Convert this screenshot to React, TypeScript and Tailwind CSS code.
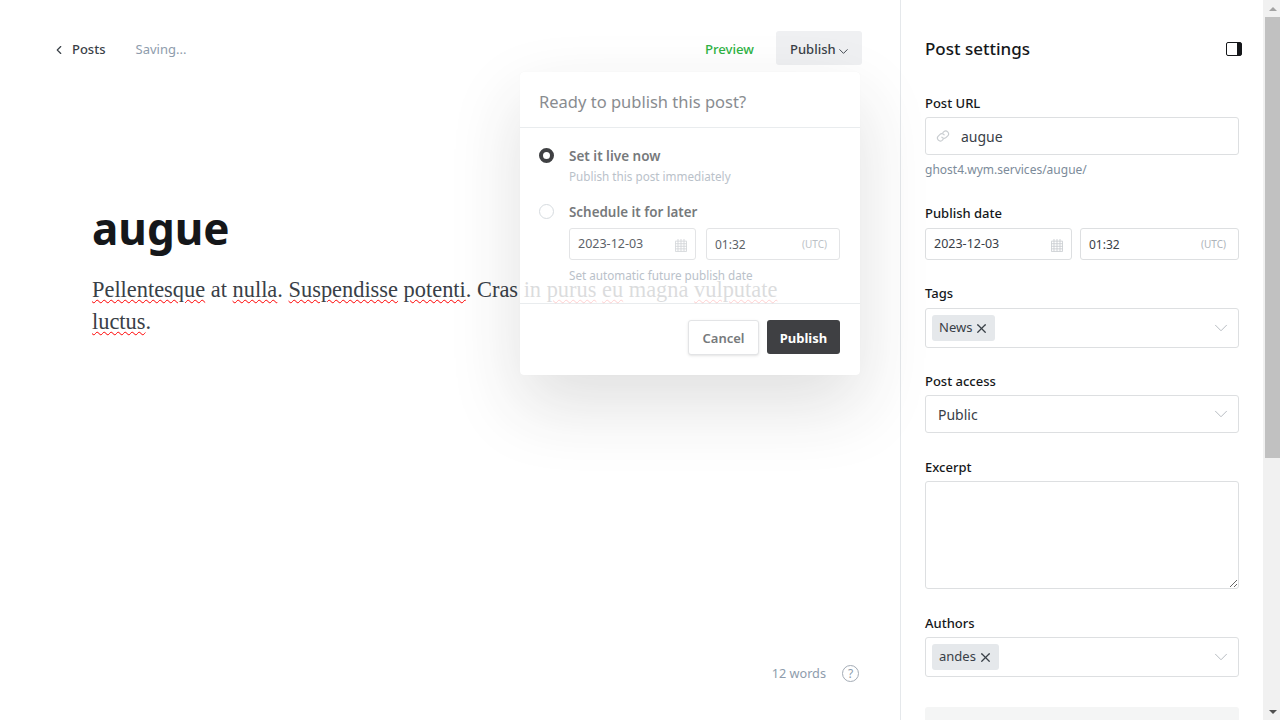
import { ChevronDown, ChevronLeft, X } from "lucide-react";

const sans = { fontFamily: '"Noto Sans", sans-serif' };

function CalendarIcon({ className }: { className: string }) {
  return (
    <svg viewBox="0 0 14 16" className={className} fill="none" stroke="currentColor" strokeWidth="1">
      <path d="M0.5 3.5h13v12h-13z M0.5 6.5h13 M0.5 9.5h13 M0.5 12.5h13 M3.5 1v14.5 M7 1v14.5 M10.5 1v14.5" />
    </svg>
  );
}

function LinkIcon() {
  return (
    <svg viewBox="0 0 24 24" className="w-[14px] h-[14px] text-[#c8ccd0]" fill="none" stroke="currentColor" strokeWidth="2" strokeLinecap="round">
      <path d="M10 14a5 5 0 0 0 7.5.5l3-3a5 5 0 0 0-7-7l-1.7 1.7" />
      <path d="M14 10a5 5 0 0 0-7.5-.5l-3 3a5 5 0 0 0 7 7l1.7-1.7" />
    </svg>
  );
}

function Field({ label, mt, mb = "mb-[5px]", children }: { label: string; mt: string; mb?: string; children: React.ReactNode }) {
  return (
    <div className={mt}>
      <div className={`text-[13px] leading-[18px] font-medium text-[#15171a] ${mb}`}>{label}</div>
      {children}
    </div>
  );
}

function Tag({ name }: { name: string }) {
  return (
    <div className="h-[26px] pl-[7px] pr-[6px] rounded-[3px] bg-[#e5e8eb] flex items-center gap-[2px] text-[13px] text-[#394047]">
      {name}
      <X size={15} strokeWidth={2} className="text-[#394047]" />
    </div>
  );
}

function TokenSelect({ name }: { name: string }) {
  return (
    <div className="h-10 border border-[#dddfe1] rounded-[3px] pl-[6px] pr-[6px] flex items-center justify-between">
      <Tag name={name} />
      <ChevronDown size={22} strokeWidth={1} className="text-[#b0b6bc]" />
    </div>
  );
}

function DateInputs({ small }: { small?: boolean }) {
  return (
    <div className={`flex w-full ${small ? "gap-[10px]" : "gap-2"}`}>
      <div className={`h-8 shrink-0 pt-[1px] border border-[#dddfe1] rounded-[3px] px-2 flex items-center justify-between text-[12.5px] text-[#394047] ${small ? "w-[127px]" : "w-[147px]"}`}>
        2023-12-03
        <CalendarIcon className="w-3 h-[14px] text-[#c8ccd0]" />
      </div>
      <div className={`h-8 shrink-0 pt-[1px] border border-[#dddfe1] rounded-[3px] px-2 flex items-center justify-between text-xs text-[#394047] ${small ? "w-[134px]" : "w-[159px]"}`}>
        01:32
        <span className="text-[10px] text-[#aeb4ba] pr-1">(UTC)</span>
      </div>
    </div>
  );
}

function PublishMenu() {
  return (
    <div className="absolute left-[520px] top-[72px] w-[340px] h-[303px] bg-white rounded-[4px] opacity-[0.82] shadow-[0_0_1px_rgba(0,0,0,0.05),0_30px_70px_rgba(0,0,0,0.15)]">
      <div className="h-[56px] pl-[19px] pt-[6px] flex items-center border-b border-[#e5e8eb] text-[16.5px] text-[#6f7378]">Ready to publish this post?</div>
      <div className="pt-[19px] pl-[19px] pr-5">
        <div className="flex">
          <div className="w-[15px] h-[15px] mt-[1px] rounded-full border-[4px] border-[#15171a] bg-white" />
          <div className="ml-[15px]">
            <div className="text-[13.5px] leading-[18px] font-semibold text-[#595c60]">Set it live now</div>
            <div className="mt-[1px] text-[11.7px] leading-[20px] text-[#abb4be]">Publish this post immediately</div>
          </div>
        </div>
        <div className="flex mt-[17px]">
          <div className="w-[15px] h-[15px] mt-[1px] rounded-full border border-[#ced4d9] bg-white shrink-0" />
          <div className="ml-[15px]">
            <div className="text-[13.4px] leading-[18px] font-semibold text-[#595c60]">Schedule it for later</div>
            <div className="mt-[7px]"><DateInputs small /></div>
            <div className="text-[11.7px] leading-4 mt-[7px] text-[#abb4be]">Set automatic future publish date</div>
          </div>
        </div>
      </div>
      <div className="absolute left-0 right-0 top-[231px] border-t border-[#e5e8eb] flex justify-end gap-2 pt-4 pr-5">
        <div className="w-[71px] h-[35px] pt-[3px] rounded-[3px] border border-[#dddfe1] shadow-sm bg-white flex items-center justify-center text-[13px] font-semibold text-[#595c60]">Cancel</div>
        <div className="w-[73px] h-[34px] pt-[3px] rounded-[3px] bg-[#15171a] flex items-center justify-center text-[13px] font-bold text-white">Publish</div>
      </div>
    </div>
  );
}

export default function App() {
  const wavy = "underline decoration-wavy decoration-[#f00] decoration-1 underline-offset-2";
  return (
    <div className="flex h-screen overflow-hidden bg-white relative" style={sans}>
      <main className="w-[900px] shrink-0 flex flex-col">
        <header className="h-[100px] shrink-0 flex items-center pl-[52px] pr-[38px]">
          <ChevronLeft size={14} strokeWidth={2} className="text-[#394047]" />
          <span className="ml-[6px] text-[13px] font-medium text-[#394047]">Posts</span>
          <span className="ml-[30px] text-[13px] text-[#8e9cac]">Saving...</span>
          <span className="ml-auto text-[13.2px] font-medium text-[#2fb344]">Preview</span>
          <div className="ml-[22px] mb-1 w-[86px] h-[34px] pt-1 pl-[14px] rounded-[3px] bg-[#eff0f2] flex items-center text-[13px] font-medium text-[#394047]">
            Publish
            <ChevronDown size={15} strokeWidth={1.5} className="mt-[3px]" />
          </div>
        </header>
        <div className="pl-[92px] pr-[108px] pt-[102px]">
          <h1 className="text-[44px] leading-[52px] font-bold text-[#15171a]">augue</h1>
          <p className="mt-[20px] text-[22.4px] leading-8 text-[#394047]" style={{ fontFamily: '"Liberation Serif", serif' }}>
            <span className={wavy}>Pellentesque</span> at <span className={wavy}>nulla</span>. <span className={wavy}>Suspendisse</span> <span className={wavy}>potenti</span>. Cras in <span className={wavy}>purus</span> <span className={wavy}>eu</span> magna <span className={wavy}>vulputate</span> <span className={wavy}>luctus</span>.
          </p>
        </div>
        <div className="mt-auto h-[62px] flex items-start justify-end gap-4 pr-[41px] text-[12.7px] text-[#8e9cac]">
          <span className="leading-[24px] mt-[3px]">12 words</span>
          <div className="w-[17px] h-[17px] mt-[7px] rounded-full border border-[#a3abb5] flex items-center justify-center text-[12px] leading-none text-[#8e9cac]">?</div>
        </div>
      </main>
      <PublishMenu />
      <aside className="w-[363px] shrink-0 border-l border-[#e5e8eb] pl-6 pr-6">
        <div className="h-[94px] pt-1 flex items-center justify-between">
          <span className="text-[17px] font-medium text-[#15171a]">Post settings</span>
          <div className="mr-[-3px] w-4 h-[14px] rounded-[2px] border-[1.5px] border-[#15171a] flex justify-end">
            <div className="w-1 bg-[#15171a]" />
          </div>
        </div>
        <Field label="Post URL" mt="">
          <div className="h-[38px] border border-[#dddfe1] rounded-[3px] flex items-center pl-[10px]">
            <LinkIcon />
            <span className="ml-[11px] text-[14px] text-[#394047]">augue</span>
          </div>
        </Field>
        <div className="mt-[5px] text-xs leading-5 text-[#7c8b9a]">ghost4.wym.services/augue/</div>
        <Field label="Publish date" mt="mt-6" mb="mb-[6px]">
          <DateInputs />
        </Field>
        <Field label="Tags" mt="mt-6" mb="mb-[6px]">
          <TokenSelect name="News" />
        </Field>
        <Field label="Post access" mt="mt-6">
          <div className="h-[38px] border border-[#dddfe1] rounded-[3px] flex items-center justify-between pl-3 pr-[6px]">
            <span className="text-[14px] text-[#394047]">Public</span>
            <ChevronDown size={22} strokeWidth={1} className="text-[#b0b6bc]" />
          </div>
        </Field>
        <Field label="Excerpt" mt="mt-[25px]">
          <textarea className="block w-full h-[108px] border border-[#dddfe1] rounded-[3px] outline-none" />
        </Field>
        <Field label="Authors" mt="mt-[25px]">
          <TokenSelect name="andes" />
        </Field>
        <div className="mt-[30px] h-40 rounded-[3px] bg-[#f4f5f5]" />
      </aside>
      <div className="w-[17px] shrink-0 bg-[#f1f1f1] flex flex-col items-end">
        <div className="h-[17px] w-[15px] flex items-center justify-center">
          <div className="border-x-[4px] border-x-transparent border-b-[4px] border-b-[#a3a3a3]" />
        </div>
        <div className="h-[441px] w-[15px] bg-[#c1c1c1]" />
        <div className="mt-auto h-[17px] w-[15px] flex items-center justify-center">
          <div className="border-x-[4px] border-x-transparent border-t-[4px] border-t-[#505050]" />
        </div>
      </div>
    </div>
  );
}
